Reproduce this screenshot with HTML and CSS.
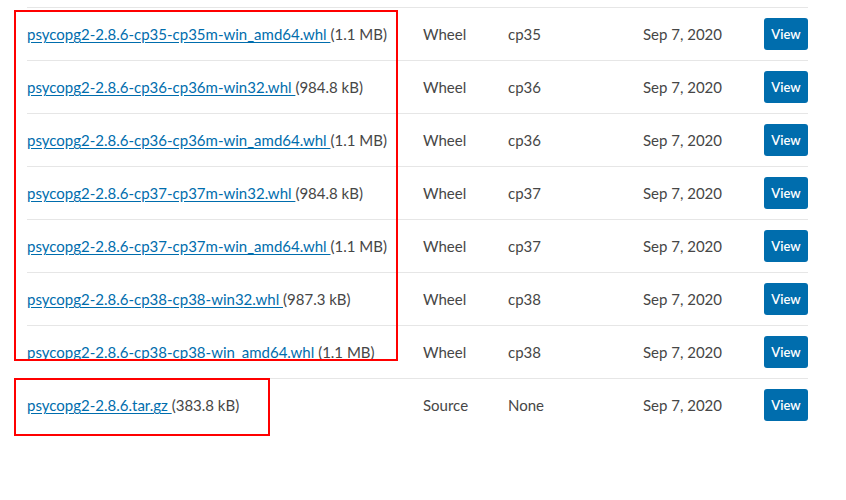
FILE: index.html
```html
<!DOCTYPE html>
<html>
<head>
<meta charset="utf-8">
<link rel="stylesheet" href="styles.css">
</head>
<body>
<div class="page">
  <table class="files">
    <tbody>
      <tr><td class="c-file"><a href="#">psycopg2-2.8.6-cp35-cp35m-win_amd64.whl </a><span class="size">(1.1 MB)</span></td><td class="c-type">Wheel</td><td class="c-py">cp35</td><td class="c-date">Sep 7, 2020</td><td class="c-btn"><a class="btn" href="#">View</a></td></tr>
      <tr><td class="c-file"><a href="#">psycopg2-2.8.6-cp36-cp36m-win32.whl </a><span class="size">(984.8 kB)</span></td><td class="c-type">Wheel</td><td class="c-py">cp36</td><td class="c-date">Sep 7, 2020</td><td class="c-btn"><a class="btn" href="#">View</a></td></tr>
      <tr><td class="c-file"><a href="#">psycopg2-2.8.6-cp36-cp36m-win_amd64.whl </a><span class="size">(1.1 MB)</span></td><td class="c-type">Wheel</td><td class="c-py">cp36</td><td class="c-date">Sep 7, 2020</td><td class="c-btn"><a class="btn" href="#">View</a></td></tr>
      <tr><td class="c-file"><a href="#">psycopg2-2.8.6-cp37-cp37m-win32.whl </a><span class="size">(984.8 kB)</span></td><td class="c-type">Wheel</td><td class="c-py">cp37</td><td class="c-date">Sep 7, 2020</td><td class="c-btn"><a class="btn" href="#">View</a></td></tr>
      <tr><td class="c-file"><a href="#">psycopg2-2.8.6-cp37-cp37m-win_amd64.whl </a><span class="size">(1.1 MB)</span></td><td class="c-type">Wheel</td><td class="c-py">cp37</td><td class="c-date">Sep 7, 2020</td><td class="c-btn"><a class="btn" href="#">View</a></td></tr>
      <tr><td class="c-file"><a href="#">psycopg2-2.8.6-cp38-cp38-win32.whl </a><span class="size">(987.3 kB)</span></td><td class="c-type">Wheel</td><td class="c-py">cp38</td><td class="c-date">Sep 7, 2020</td><td class="c-btn"><a class="btn" href="#">View</a></td></tr>
      <tr><td class="c-file"><a href="#">psycopg2-2.8.6-cp38-cp38-win_amd64.whl </a><span class="size">(1.1 MB)</span></td><td class="c-type">Wheel</td><td class="c-py">cp38</td><td class="c-date">Sep 7, 2020</td><td class="c-btn"><a class="btn" href="#">View</a></td></tr>
      <tr><td class="c-file"><a href="#">psycopg2-2.8.6.tar.gz </a><span class="size">(383.8 kB)</span></td><td class="c-type">Source</td><td class="c-py">None</td><td class="c-date">Sep 7, 2020</td><td class="c-btn"><a class="btn" href="#">View</a></td></tr>
    </tbody>
  </table>
  <div class="mark mark-wheels"></div>
  <div class="mark mark-source"></div>
</div>
</body>
</html>
```
FILE: styles.css
```css
html, body {
  margin: 0;
  padding: 0;
  background: #ffffff;
}
body {
  font-family: "Source Sans Pro", Lato, "Noto Sans", sans-serif;
  font-size: 15px;
  color: #464646;
}
.page {
  position: relative;
  width: 846px;
  height: 500px;
  padding: 7px 0 0 27px;
  box-sizing: border-box;
}
.files {
  width: 781px;
  border-collapse: collapse;
  table-layout: fixed;
}
.files td {
  height: 52px;
  padding: 0;
  border-top: 1px solid #e6e6e6;
  vertical-align: middle;
  white-space: nowrap;
}
.c-file { width: 396px; }
.c-type { width: 85px; }
.c-py { width: 135px; }
.c-date { width: 121px; }
.c-btn { width: 44px; text-align: right; }
.c-file a {
  color: #006dad;
  text-decoration: underline;
  text-underline-offset: 2px;
}
.btn {
  display: inline-block;
  width: 44px;
  height: 32px;
  line-height: 32px;
  text-align: center;
  background: #006dad;
  color: #ffffff;
  font-size: 13px;
  font-weight: 600;
  border-radius: 3px;
  text-decoration: none;
  vertical-align: middle;
}
.mark {
  position: absolute;
  border: 2px solid #ff0000;
  box-sizing: border-box;
}
.mark-wheels {
  left: 14px;
  top: 10px;
  width: 384px;
  height: 351px;
}
.mark-source {
  left: 14px;
  top: 378px;
  width: 256px;
  height: 58px;
}
```
